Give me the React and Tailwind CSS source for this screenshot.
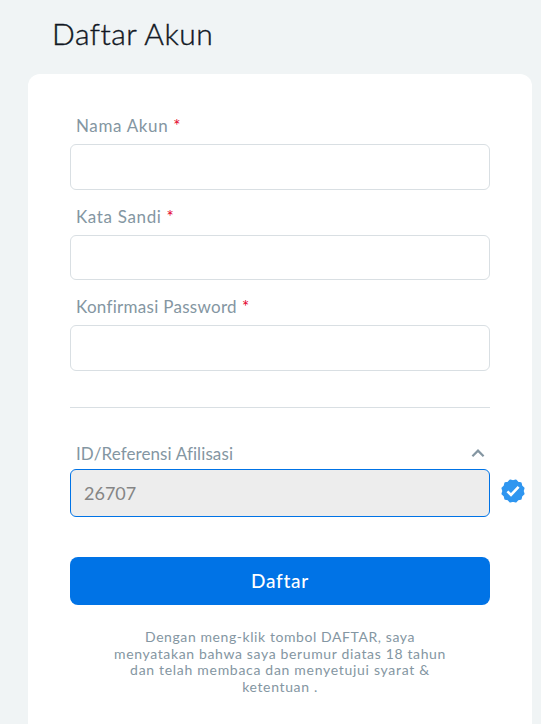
function Field({ label, height, spacing }) {
  return (
    <div>
      <label className="flex h-5 items-center gap-[5px] pl-[6px] text-[17px] leading-5 text-[#8496a2]">
        <span className={spacing}>{label}</span>
        <span className="text-[#e4002b]">*</span>
      </label>
      <input className={`mt-2 block w-full rounded-md border border-[#d9dfe3] bg-white px-3 outline-none ${height}`} />
    </div>
  );
}

// Twelve-lobed rosette, alternating between lobe tips and notches.
const rosette = Array.from({ length: 24 }, (_, i) => {
  const angle = ((i * 15 + 15) * Math.PI) / 180;
  const radius = i % 2 === 0 ? 11 : 9.8;
  return `${(12 + radius * Math.sin(angle)).toFixed(2)},${(12 - radius * Math.cos(angle)).toFixed(2)}`;
}).join(" ");

function VerifiedBadge() {
  return (
    <svg className="mb-1 size-6 shrink-0" viewBox="0 0 24 24">
      <polygon points={rosette} fill="#2f96f0" stroke="#2f96f0" strokeWidth="1.8" strokeLinejoin="round" />
      <path d="M6.4 12.4 10 16 17.6 7.8" fill="none" stroke="white" strokeWidth="2.6" />
    </svg>
  );
}

export default function App() {
  return (
    <main className="h-[724px] overflow-hidden bg-[#f0f4f5] pr-[9px] pl-7 font-['Lato',sans-serif]">
      <h1 className="h-[74px] pt-[13px] pl-6 text-[30px] leading-10 font-light tracking-[0.5px] text-[#111723] [-webkit-text-stroke:0.4px_#111723]">Daftar Akun</h1>
      <section className="h-[660px] rounded-t-xl bg-white px-[42px] pt-[42px]">
        <form>
          <div className="flex flex-col gap-[17px]">
            <Field label="Nama Akun" height="h-[46px]" spacing="tracking-[0.65px]" />
            <Field label="Kata Sandi" height="h-[45px]" spacing="tracking-[0.65px]" />
            <Field label="Konfirmasi Password" height="h-[46px]" spacing="tracking-[0.29px]" />
          </div>
          <hr className="mt-9 border-[#d9dfe3]" />
          <div className="mt-9 flex h-5 items-center justify-between pr-[5px] pl-[6px] text-[17px] leading-5 text-[#8496a2]">
            <span className="tracking-[0.1px]">ID/Referensi Afilisasi</span>
            <svg className="h-[14px] w-[14px]" viewBox="0 0 14 14" fill="none" stroke="currentColor" strokeWidth="2.2">
              <path d="M1.4 9.2 7 3.6l5.6 5.6" />
            </svg>
          </div>
          <div className="mt-[5px] flex w-[455px] items-center gap-[11px]">
            <input defaultValue="26707" className="h-12 w-[420px] shrink-0 rounded-md border border-[#0073e6] bg-[#ededed] px-[13px] text-[18px] text-[#858585] outline-none" />
            <VerifiedBadge />
          </div>
          <button type="button" className="mt-10 h-12 w-full rounded-lg bg-[#0073e6] text-[19px] font-medium tracking-[0.7px] text-white">Daftar</button>
        </form>
        <p className="mt-[24px] text-center text-[14px] leading-[16.7px] tracking-[0.64px] text-[#8496a2]">
          <span className="tracking-[0.58px]">Dengan meng-klik tombol DAFTAR, saya</span><br />
          menyatakan bahwa saya berumur diatas 18 tahun<br />
          <span className="tracking-[0.7px]">dan telah membaca dan menyetujui syarat &amp;</span><br />
          ketentuan .
        </p>
      </section>
    </main>
  );
}
